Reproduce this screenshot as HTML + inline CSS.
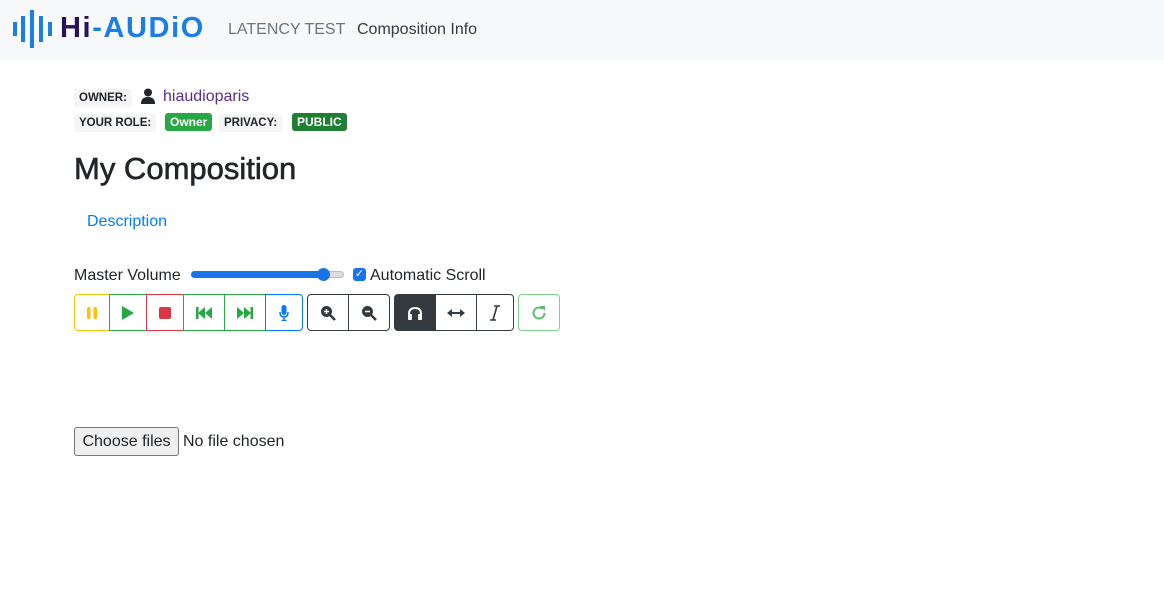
<!DOCTYPE html>
<html><head><style>
body{margin:0;font-family:"Liberation Sans",sans-serif;color:#212529;background:#fff;width:1164px;height:601px;overflow:hidden;position:relative}
.nav{position:absolute;left:0;top:0;width:1164px;height:60px;background:#f8f9fa}
.a{position:absolute;white-space:nowrap}
.lbl{font-size:11.5px;font-weight:bold;background:#f5f5f5;padding:3px 5px;border-radius:3px}
.bdg{font-size:12px;font-weight:bold;color:#fff;padding:2px 5px;border-radius:3px}
.b{position:absolute;top:294px;height:37px;box-sizing:border-box;border:1px solid;display:flex;align-items:center;justify-content:center}
</style></head><body>
<div class="nav">
<svg class="a" style="left:13px;top:10px" width="40" height="38"><g fill="#1a7ee6"><rect x="0" y="12" width="4" height="14"/><rect x="8" y="6" width="4" height="26"/><rect x="17" y="0" width="4" height="38"/><rect x="26" y="6" width="4" height="26"/><rect x="35" y="12" width="4" height="14"/></g></svg>
<div class="a" style="left:60px;top:12px;font-size:29px;font-weight:bold;letter-spacing:1.6px"><span style="color:#27125c">Hi</span><span style="color:#1a7ee6">-AUDiO</span></div>
<div class="a" style="left:228px;top:21px;font-size:16px;color:#6c757d">LATENCY TEST</div>
<div class="a" style="left:357px;top:21px;font-size:16px;color:#343a40">Composition Info</div>
</div>
<div class="a lbl" style="left:74px;top:89px">OWNER:</div>
<svg class="a" style="left:141px;top:88px" width="14" height="16"><circle cx="7" cy="4.5" r="4" fill="#212529"/><path d="M0 16 Q0 9 7 9 Q14 9 14 16Z" fill="#212529"/></svg>
<div class="a" style="left:163px;top:88px;font-size:16px;color:#5a2d91">hiaudioparis</div>
<div class="a lbl" style="left:74px;top:114px">YOUR ROLE:</div>
<div class="a bdg" style="left:165px;top:113px;background:#28a745">Owner</div>
<div class="a lbl" style="left:219px;top:114px">PRIVACY:</div>
<div class="a bdg" style="left:292px;top:113px;background:#1e7e34">PUBLIC</div>
<div class="a" style="left:74px;top:151px;font-size:31px;color:#212529;-webkit-text-stroke:0.6px #212529">My Composition</div>
<div class="a" style="left:87px;top:213px;font-size:16px;color:#007bff">Description</div>
<div class="a" style="left:74px;top:267px;font-size:16px">Master Volume</div>
<div class="a" style="left:191px;top:271px;width:153px;height:7px;border-radius:4px;background:#ddd;border:1px solid #bbb;box-sizing:border-box"></div>
<div class="a" style="left:191px;top:271px;width:133px;height:7px;border-radius:4px;background:#1a73e8"></div>
<div class="a" style="left:317px;top:268px;width:13px;height:13px;border-radius:50%;background:#1a73e8"></div>
<div class="a" style="left:353px;top:268px;width:13px;height:13px;border-radius:3px;background:#1a73e8;color:#fff;font-size:11px;text-align:center;line-height:13px">✓</div>
<div class="a" style="left:370px;top:267px;font-size:16px">Automatic Scroll</div>
<div class="b" style="left:74px;width:36px;border-color:#ffc107;border-radius:4px 0 0 4px"><svg width="10" height="12"><rect x="0" y="0" width="3.5" height="12" rx="1.5" fill="#ffc107"/><rect x="6.5" y="0" width="3.5" height="12" rx="1.5" fill="#ffc107"/></svg></div>
<div class="b" style="left:109px;width:38px;border-color:#28a745"><svg width="12" height="14"><path d="M0 0L12 7L0 14Z" fill="#28a745"/></svg></div>
<div class="b" style="left:146px;width:38px;border-color:#dc3545"><svg width="12" height="12"><rect width="12" height="12" rx="2" fill="#dc3545"/></svg></div>
<div class="b" style="left:183px;width:42px;border-color:#28a745"><svg width="16" height="12"><rect x="0" y="0" width="2.5" height="12" fill="#28a745"/><path d="M2 6L9 0V12Z M9 6L16 0V12Z" fill="#28a745"/></svg></div>
<div class="b" style="left:224px;width:42px;border-color:#28a745"><svg width="16" height="12"><path d="M0 0L7 6L0 12Z M7 0L14 6L7 12Z" fill="#28a745"/><rect x="13.5" y="0" width="2.5" height="12" fill="#28a745"/></svg></div>
<div class="b" style="left:265px;width:38px;border-color:#007bff;border-radius:0 4px 4px 0"><svg width="10" height="16"><rect x="2.5" y="0" width="5" height="10" rx="2.5" fill="#007bff"/><path d="M1 7Q1 12 5 12Q9 12 9 7M5 12V16M2.5 15.5H7.5" stroke="#007bff" stroke-width="1.5" fill="none"/></svg></div>
<div class="b" style="left:307px;width:42px;border-color:#343a40;border-radius:4px 0 0 4px"><svg width="16" height="16"><circle cx="6.5" cy="6.5" r="5.5" fill="#343a40"/><path d="M10 10L15 15" stroke="#343a40" stroke-width="2.5"/><path d="M4 6.5H9M6.5 4V9" stroke="#fff" stroke-width="1.5"/></svg></div>
<div class="b" style="left:348px;width:42px;border-color:#343a40;border-radius:0 4px 4px 0"><svg width="16" height="16"><circle cx="6.5" cy="6.5" r="5.5" fill="#343a40"/><path d="M10 10L15 15" stroke="#343a40" stroke-width="2.5"/><path d="M4 6.5H9" stroke="#fff" stroke-width="1.5"/></svg></div>
<div class="b" style="left:394px;width:42px;border-color:#343a40;background:#343a40;border-radius:4px 0 0 4px"><svg width="16" height="14"><path d="M2 12V8Q2 2 8 2Q14 2 14 8V12" stroke="#fff" stroke-width="2" fill="none"/><rect x="1" y="8" width="4" height="6" rx="1" fill="#fff"/><rect x="11" y="8" width="4" height="6" rx="1" fill="#fff"/></svg></div>
<div class="b" style="left:435px;width:42px;border-color:#343a40"><svg width="18" height="10"><path d="M3 5H15" stroke="#343a40" stroke-width="2"/><path d="M0 5L5 1V9Z M18 5L13 1V9Z" fill="#343a40"/></svg></div>
<div class="b" style="left:476px;width:38px;border-color:#343a40;border-radius:0 4px 4px 0"><svg width="12" height="16"><path d="M5 1H11M1 15H7M8 1L4 15" stroke="#343a40" stroke-width="1.6" fill="none"/></svg></div>
<div class="b" style="left:518px;width:42px;border-color:#7fcf8e;border-radius:4px"><svg width="16" height="16"><path d="M13.5 8A5.5 5.5 0 1 1 11.5 3.8" stroke="#5bbf6d" stroke-width="2" fill="none"/><path d="M9 1H14V6Z" fill="#5bbf6d"/></svg></div>
<div class="a" style="left:74px;top:427px;width:105px;height:29px;box-sizing:border-box;border:1px solid #767676;border-radius:3px;background:#efefef;font-size:16px;text-align:center;line-height:27px">Choose files</div>
<div class="a" style="left:183px;top:433px;font-size:16px">No file chosen</div>
</body></html>
